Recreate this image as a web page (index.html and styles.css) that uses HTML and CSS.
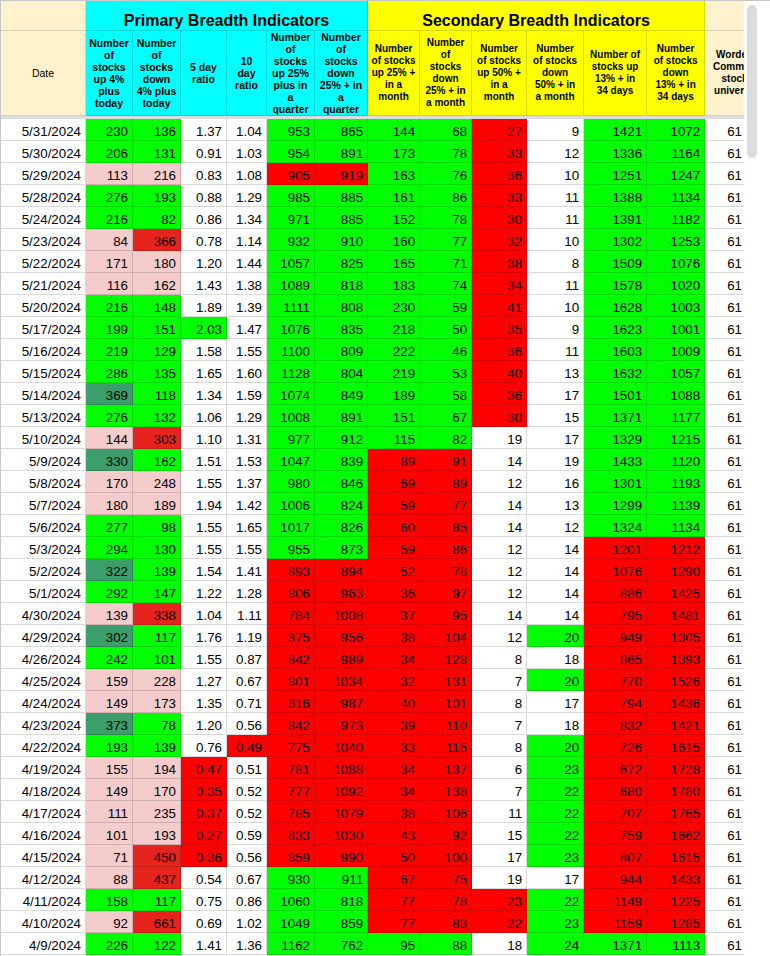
FILE: index.html
```html
<!DOCTYPE html>
<html>
<head>
<meta charset="utf-8">
<link rel="stylesheet" href="styles.css">
</head>
<body>
<div class="wrap">
<div class="sheet">
<table class="grid">
<colgroup>
<col class="w85"><col class="w47"><col class="w48"><col class="w46"><col class="w40"><col class="w48"><col class="w53"><col class="w52"><col class="w52"><col class="w55"><col class="w57"><col class="w63"><col class="w58"><col class="w60">
</colgroup>
<thead>
<tr class="r1">
<td class="be"></td>
<td class="cy title" colspan="6">Primary Breadth Indicators</td>
<td class="ye title" colspan="6">Secondary Breadth Indicators</td>
<td class="be"></td>
</tr>
<tr class="r2">
<td class="be date">Date</td>
<td class="cy hp">Number<br>of<br>stocks<br>up 4%<br>plus<br>today</td>
<td class="cy hp">Number<br>of<br>stocks<br>down<br>4% plus<br>today</td>
<td class="cy hp">5 day<br>ratio</td>
<td class="cy hp">10<br>day<br>ratio</td>
<td class="cy hp">Number<br>of<br>stocks<br>up 25%<br>plus in<br>a<br>quarter</td>
<td class="cy hp">Number<br>of<br>stocks<br>down<br>25% + in<br>a<br>quarter</td>
<td class="ye hs">Number<br>of stocks<br>up 25% +<br>in a<br>month</td>
<td class="ye hs">Number<br>of<br>stocks<br>down<br>25% + in<br>a month</td>
<td class="ye hs">Number<br>of stocks<br>up 50% +<br>in a<br>month</td>
<td class="ye hs">Number<br>of stocks<br>down<br>50% + in<br>a month</td>
<td class="ye hs">Number of<br>stocks up<br>13% + in<br>34 days</td>
<td class="ye hs">Number<br>of stocks<br>down<br>13% + in<br>34 days</td>
<td class="be hs">Worden<br>Common<br>stock<br>universe</td>
</tr>
<tr class="freeze"><td colspan="14"></td></tr>
</thead>
<tbody>
<tr><td>5/31/2024</td><td class="g">230</td><td class="g">136</td><td>1.37</td><td>1.04</td><td class="g">953</td><td class="g">865</td><td class="g">144</td><td class="g">68</td><td class="r">27</td><td>9</td><td class="g">1421</td><td class="g">1072</td><td class="u">61</td></tr>
<tr><td>5/30/2024</td><td class="g">206</td><td class="g">131</td><td>0.91</td><td>1.03</td><td class="g">954</td><td class="g">891</td><td class="g">173</td><td class="g">78</td><td class="r">33</td><td>12</td><td class="g">1336</td><td class="g">1164</td><td class="u">61</td></tr>
<tr><td>5/29/2024</td><td class="p">113</td><td class="p">216</td><td>0.83</td><td>1.08</td><td class="r">905</td><td class="r">919</td><td class="g">163</td><td class="g">76</td><td class="r">36</td><td>10</td><td class="g">1251</td><td class="g">1247</td><td class="u">61</td></tr>
<tr><td>5/28/2024</td><td class="g">276</td><td class="g">193</td><td>0.88</td><td>1.29</td><td class="g">985</td><td class="g">885</td><td class="g">161</td><td class="g">86</td><td class="r">33</td><td>11</td><td class="g">1388</td><td class="g">1134</td><td class="u">61</td></tr>
<tr><td>5/24/2024</td><td class="g">216</td><td class="g">82</td><td>0.86</td><td>1.34</td><td class="g">971</td><td class="g">885</td><td class="g">152</td><td class="g">78</td><td class="r">30</td><td>11</td><td class="g">1391</td><td class="g">1182</td><td class="u">61</td></tr>
<tr><td>5/23/2024</td><td class="p">84</td><td class="dr">366</td><td>0.78</td><td>1.14</td><td class="g">932</td><td class="g">910</td><td class="g">160</td><td class="g">77</td><td class="r">32</td><td>10</td><td class="g">1302</td><td class="g">1253</td><td class="u">61</td></tr>
<tr><td>5/22/2024</td><td class="p">171</td><td class="p">180</td><td>1.20</td><td>1.44</td><td class="g">1057</td><td class="g">825</td><td class="g">165</td><td class="g">71</td><td class="r">38</td><td>8</td><td class="g">1509</td><td class="g">1076</td><td class="u">61</td></tr>
<tr><td>5/21/2024</td><td class="p">116</td><td class="p">162</td><td>1.43</td><td>1.38</td><td class="g">1089</td><td class="g">818</td><td class="g">183</td><td class="g">74</td><td class="r">34</td><td>11</td><td class="g">1578</td><td class="g">1020</td><td class="u">61</td></tr>
<tr><td>5/20/2024</td><td class="g">216</td><td class="g">148</td><td>1.89</td><td>1.39</td><td class="g">1111</td><td class="g">808</td><td class="g">230</td><td class="g">59</td><td class="r">41</td><td>10</td><td class="g">1628</td><td class="g">1003</td><td class="u">61</td></tr>
<tr><td>5/17/2024</td><td class="g">199</td><td class="g">151</td><td class="g">2.03</td><td>1.47</td><td class="g">1076</td><td class="g">835</td><td class="g">218</td><td class="g">50</td><td class="r">35</td><td>9</td><td class="g">1623</td><td class="g">1001</td><td class="u">61</td></tr>
<tr><td>5/16/2024</td><td class="g">219</td><td class="g">129</td><td>1.58</td><td>1.55</td><td class="g">1100</td><td class="g">809</td><td class="g">222</td><td class="g">46</td><td class="r">36</td><td>11</td><td class="g">1603</td><td class="g">1009</td><td class="u">61</td></tr>
<tr><td>5/15/2024</td><td class="g">286</td><td class="g">135</td><td>1.65</td><td>1.60</td><td class="g">1128</td><td class="g">804</td><td class="g">219</td><td class="g">53</td><td class="r">40</td><td>13</td><td class="g">1632</td><td class="g">1057</td><td class="u">61</td></tr>
<tr><td>5/14/2024</td><td class="dg">369</td><td class="g">118</td><td>1.34</td><td>1.59</td><td class="g">1074</td><td class="g">849</td><td class="g">189</td><td class="g">58</td><td class="r">36</td><td>17</td><td class="g">1501</td><td class="g">1088</td><td class="u">61</td></tr>
<tr><td>5/13/2024</td><td class="g">276</td><td class="g">132</td><td>1.06</td><td>1.29</td><td class="g">1008</td><td class="g">891</td><td class="g">151</td><td class="g">67</td><td class="r">30</td><td>15</td><td class="g">1371</td><td class="g">1177</td><td class="u">61</td></tr>
<tr><td>5/10/2024</td><td class="p">144</td><td class="dr">303</td><td>1.10</td><td>1.31</td><td class="g">977</td><td class="g">912</td><td class="g">115</td><td class="g">82</td><td>19</td><td>17</td><td class="g">1329</td><td class="g">1215</td><td class="u">61</td></tr>
<tr><td>5/9/2024</td><td class="dg">330</td><td class="g">162</td><td>1.51</td><td>1.53</td><td class="g">1047</td><td class="g">839</td><td class="r">89</td><td class="r">91</td><td>14</td><td>19</td><td class="g">1433</td><td class="g">1120</td><td class="u">61</td></tr>
<tr><td>5/8/2024</td><td class="p">170</td><td class="p">248</td><td>1.55</td><td>1.37</td><td class="g">980</td><td class="g">846</td><td class="r">69</td><td class="r">89</td><td>12</td><td>16</td><td class="g">1301</td><td class="g">1193</td><td class="u">61</td></tr>
<tr><td>5/7/2024</td><td class="p">180</td><td class="p">189</td><td>1.94</td><td>1.42</td><td class="g">1006</td><td class="g">824</td><td class="r">59</td><td class="r">77</td><td>14</td><td>13</td><td class="g">1299</td><td class="g">1139</td><td class="u">61</td></tr>
<tr><td>5/6/2024</td><td class="g">277</td><td class="g">98</td><td>1.55</td><td>1.65</td><td class="g">1017</td><td class="g">826</td><td class="r">60</td><td class="r">85</td><td>14</td><td>12</td><td class="g">1324</td><td class="g">1134</td><td class="u">61</td></tr>
<tr><td>5/3/2024</td><td class="g">294</td><td class="g">130</td><td>1.55</td><td>1.55</td><td class="g">955</td><td class="g">873</td><td class="r">59</td><td class="r">86</td><td>12</td><td>14</td><td class="r">1201</td><td class="r">1212</td><td class="u">61</td></tr>
<tr><td>5/2/2024</td><td class="dg">322</td><td class="g">139</td><td>1.54</td><td>1.41</td><td class="r">893</td><td class="r">894</td><td class="r">52</td><td class="r">78</td><td>12</td><td>14</td><td class="r">1076</td><td class="r">1290</td><td class="u">61</td></tr>
<tr><td>5/1/2024</td><td class="g">292</td><td class="g">147</td><td>1.22</td><td>1.28</td><td class="r">806</td><td class="r">963</td><td class="r">36</td><td class="r">97</td><td>12</td><td>14</td><td class="r">886</td><td class="r">1425</td><td class="u">61</td></tr>
<tr><td>4/30/2024</td><td class="p">139</td><td class="dr">338</td><td>1.04</td><td>1.11</td><td class="r">784</td><td class="r">1008</td><td class="r">37</td><td class="r">95</td><td>14</td><td>14</td><td class="r">795</td><td class="r">1481</td><td class="u">61</td></tr>
<tr><td>4/29/2024</td><td class="dg">302</td><td class="g">117</td><td>1.76</td><td>1.19</td><td class="r">875</td><td class="r">956</td><td class="r">38</td><td class="r">104</td><td>12</td><td class="g">20</td><td class="r">949</td><td class="r">1305</td><td class="u">61</td></tr>
<tr><td>4/26/2024</td><td class="g">242</td><td class="g">101</td><td>1.55</td><td>0.87</td><td class="r">842</td><td class="r">989</td><td class="r">34</td><td class="r">128</td><td>8</td><td>18</td><td class="r">865</td><td class="r">1393</td><td class="u">61</td></tr>
<tr><td>4/25/2024</td><td class="p">159</td><td class="p">228</td><td>1.27</td><td>0.67</td><td class="r">801</td><td class="r">1034</td><td class="r">32</td><td class="r">131</td><td>7</td><td class="g">20</td><td class="r">770</td><td class="r">1526</td><td class="u">61</td></tr>
<tr><td>4/24/2024</td><td class="p">149</td><td class="p">173</td><td>1.35</td><td>0.71</td><td class="r">816</td><td class="r">987</td><td class="r">40</td><td class="r">101</td><td>8</td><td>17</td><td class="r">794</td><td class="r">1436</td><td class="u">61</td></tr>
<tr><td>4/23/2024</td><td class="dg">373</td><td class="g">78</td><td>1.20</td><td>0.56</td><td class="r">842</td><td class="r">973</td><td class="r">39</td><td class="r">110</td><td>7</td><td>18</td><td class="r">832</td><td class="r">1421</td><td class="u">61</td></tr>
<tr><td>4/22/2024</td><td class="g">193</td><td class="g">139</td><td>0.76</td><td class="r">0.49</td><td class="r">775</td><td class="r">1040</td><td class="r">33</td><td class="r">115</td><td>8</td><td class="g">20</td><td class="r">726</td><td class="r">1615</td><td class="u">61</td></tr>
<tr><td>4/19/2024</td><td class="p">155</td><td class="p">194</td><td class="r">0.47</td><td>0.51</td><td class="r">781</td><td class="r">1088</td><td class="r">34</td><td class="r">137</td><td>6</td><td class="g">23</td><td class="r">672</td><td class="r">1728</td><td class="u">61</td></tr>
<tr><td>4/18/2024</td><td class="p">149</td><td class="p">170</td><td class="r">0.35</td><td>0.52</td><td class="r">777</td><td class="r">1092</td><td class="r">34</td><td class="r">138</td><td>7</td><td class="g">22</td><td class="r">680</td><td class="r">1780</td><td class="u">61</td></tr>
<tr><td>4/17/2024</td><td class="p">111</td><td class="p">235</td><td class="r">0.37</td><td>0.52</td><td class="r">785</td><td class="r">1079</td><td class="r">38</td><td class="r">106</td><td>11</td><td class="g">22</td><td class="r">707</td><td class="r">1765</td><td class="u">61</td></tr>
<tr><td>4/16/2024</td><td class="p">101</td><td class="p">193</td><td class="r">0.27</td><td>0.59</td><td class="r">833</td><td class="r">1030</td><td class="r">43</td><td class="r">92</td><td>15</td><td class="g">22</td><td class="r">759</td><td class="r">1662</td><td class="u">61</td></tr>
<tr><td>4/15/2024</td><td class="p">71</td><td class="dr">450</td><td class="r">0.36</td><td>0.56</td><td class="r">859</td><td class="r">990</td><td class="r">50</td><td class="r">100</td><td>17</td><td class="g">23</td><td class="r">807</td><td class="r">1615</td><td class="u">61</td></tr>
<tr><td>4/12/2024</td><td class="p">88</td><td class="dr">437</td><td>0.54</td><td>0.67</td><td class="g">930</td><td class="g">911</td><td class="r">67</td><td class="r">75</td><td>19</td><td>17</td><td class="r">944</td><td class="r">1433</td><td class="u">61</td></tr>
<tr><td>4/11/2024</td><td class="g">158</td><td class="g">117</td><td>0.75</td><td>0.86</td><td class="g">1060</td><td class="g">818</td><td class="r">77</td><td class="r">78</td><td class="r">23</td><td class="g">22</td><td class="r">1149</td><td class="r">1225</td><td class="u">61</td></tr>
<tr><td>4/10/2024</td><td class="p">92</td><td class="dr">661</td><td>0.69</td><td>1.02</td><td class="g">1049</td><td class="g">859</td><td class="r">77</td><td class="r">83</td><td class="r">22</td><td class="g">23</td><td class="r">1159</td><td class="r">1285</td><td class="u">61</td></tr>
<tr><td>4/9/2024</td><td class="g">226</td><td class="g">122</td><td>1.41</td><td>1.36</td><td class="g">1162</td><td class="g">762</td><td class="g">95</td><td class="g">88</td><td>18</td><td class="g">24</td><td class="g">1371</td><td class="g">1113</td><td class="u">61</td></tr>
</tbody>
</table>
</div>
<div class="track"><div class="thumb"></div></div>
</div>
</body>
</html>
```
FILE: styles.css
```css
* { box-sizing: border-box; }
html, body { margin: 0; padding: 0; background: #fff; }
body { font-family: "Liberation Sans", Arial, sans-serif; color: #000; }

.wrap {
  display: flex;
  width: 770px;
  height: 956px;
  overflow: hidden;
  border-top: 1px solid #c7c7c7;
}
.sheet {
  flex: none;
  width: 744px;
  overflow: hidden;
  border-left: 1px solid #c7c7c7;
}
.track { flex: 1; background: #fff; }
.thumb {
  width: 10px;
  height: 153px;
  margin: 4px 0 0 3px;
  border-radius: 5px;
  background: #dadce0;
}

.grid {
  border-collapse: separate;
  border-spacing: 0;
  table-layout: fixed;
  width: 764px;
}
.w85 { width: 85px; } .w47 { width: 47px; } .w48 { width: 48px; }
.w46 { width: 46px; } .w40 { width: 40px; } .w53 { width: 53px; }
.w52 { width: 52px; } .w55 { width: 55px; } .w57 { width: 57px; }
.w63 { width: 63px; } .w58 { width: 58px; } .w60 { width: 60px; }

.grid td {
  border-right: 1px solid rgba(0, 0, 0, 0.15);
  border-bottom: 1px solid rgba(0, 0, 0, 0.15);
  padding: 0 4px 0 2px;
  height: 22px;
  font-size: 13.33px;
  line-height: 16px;
  text-align: right;
  vertical-align: bottom;
  white-space: nowrap;
  overflow: hidden;
}

.grid .r1 td { height: 30px; }
.grid .title {
  font-size: 16px;
  font-weight: bold;
  line-height: 18px;
  text-align: center;
  padding: 0;
}
.grid .r2 td {
  height: 85px;
  vertical-align: middle;
  text-align: center;
  padding: 0;
  line-height: 12px;
}
.grid .r2 .hp { font-size: 10.5px; font-weight: bold; }
.grid .r2 .hs { font-size: 10px; font-weight: bold; }
.grid .r2 .date { font-size: 10.5px; font-weight: normal; }

.grid .freeze td {
  height: 3px;
  padding: 0;
  border: none;
  background: #dadce0;
  font-size: 0;
  line-height: 0;
}

.be { background: #fff2cc; }
.cy { background: #00ffff; }
.ye { background: #ffff00; }
.g { background: #00ff00; }
.r { background: #ff0000; }
.p { background: #f4cccc; }
.dr { background: #e6241e; }
.dg { background: #3c9e6a; }
.grid td.u { text-align: center; padding: 0; }
```
